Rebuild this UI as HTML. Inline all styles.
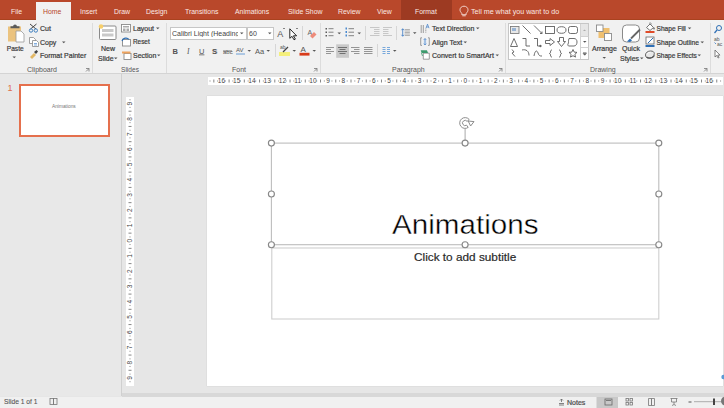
<!DOCTYPE html>
<html><head><meta charset="utf-8">
<style>
*{margin:0;padding:0;box-sizing:border-box}
html,body{width:724px;height:408px;overflow:hidden;background:#e6e6e6;font-family:"Liberation Sans",sans-serif}
.a{position:absolute}
.t{position:absolute;white-space:nowrap;line-height:1;font-size:7px;color:#3a3a3a;-webkit-text-stroke:0.2px #3a3a3a}
#tabs{left:0;top:0;width:724px;height:20px;background:#b9482b}
.tab{position:absolute;top:7px;font-size:6.9px;color:#fbe9e3;white-space:nowrap;line-height:10px}
#ribbon{left:0;top:20px;width:724px;height:54px;background:#f1f1f1;border-bottom:1px solid #d4d4d4}
.sep{position:absolute;width:1px;background:#dcdcdc}
.lbl{position:absolute;top:65.5px;font-size:7px;color:#555;white-space:nowrap;line-height:8px}
.dd{position:absolute;width:0;height:0;border-left:2px solid transparent;border-right:2px solid transparent;border-top:2px solid #555}
#status{left:0;top:396.5px;width:724px;height:12px;background:#f0f0f0}
</style></head><body>
<!-- tab bar -->
<div id="tabs" class="a">
  <div class="a" style="left:0;top:19px;width:724px;height:1px;background:#a9421f"></div>
  <div class="tab" style="left:11px">File</div>
  <div class="a" style="left:36px;top:2px;width:35px;height:18px;background:#f1f1f1"></div>
  <div class="tab" style="left:43px;color:#b7472a">Home</div>
  <div class="tab" style="left:80px">Insert</div>
  <div class="tab" style="left:114px">Draw</div>
  <div class="tab" style="left:146px">Design</div>
  <div class="tab" style="left:185px">Transitions</div>
  <div class="tab" style="left:235px">Animations</div>
  <div class="tab" style="left:288px">Slide Show</div>
  <div class="tab" style="left:338px">Review</div>
  <div class="tab" style="left:377px">View</div>
  <div class="a" style="left:401px;top:0;width:51px;height:20px;background:#9d3a22"></div>
  <div class="tab" style="left:415px">Format</div>
  <div class="tab" style="left:471px;font-size:7.15px">Tell me what you want to do</div>
  <svg class="a" style="left:459px;top:5px" width="10" height="12" viewBox="0 0 10 12"><path d="M2.8 8.2C1.5 7 1 6 1 4.8 1 2.7 2.8 1.2 5 1.2s4 1.5 4 3.6c0 1.2-.5 2.2-1.8 3.4v1.5H2.8z" fill="none" stroke="#f6e0da" stroke-width="0.9"/><path d="M3.3 10.8h3.4" stroke="#f6e0da" stroke-width="0.9"/></svg>
</div>
<!-- ribbon -->
<div id="ribbon" class="a"></div>
<div class="sep" style="left:92px;top:23px;height:50px"></div>
<div class="sep" style="left:166px;top:23px;height:50px"></div>
<div class="sep" style="left:320px;top:23px;height:50px"></div>
<div class="sep" style="left:505px;top:23px;height:50px"></div>
<div class="sep" style="left:710px;top:23px;height:50px"></div>
<div class="lbl" style="left:27px">Clipboard</div>
<div class="lbl" style="left:121px;font-size:6.6px">Slides</div>
<div class="lbl" style="left:232px">Font</div>
<div class="lbl" style="left:392px">Paragraph</div>
<div class="lbl" style="left:590px">Drawing</div>

<!-- ribbon texts -->
<div class="t" style="left:6.8px;top:45.8px;font-size:6.6px">Paste</div>
<div class="t" style="left:40px;top:25px">Cut</div>
<div class="t" style="left:40px;top:39px">Copy</div>
<div class="t" style="left:40px;top:52px">Format Painter</div>
<div class="t" style="left:101px;top:45px">New</div>
<div class="t" style="left:98px;top:55px">Slide</div>
<div class="t" style="left:133px;top:25px">Layout</div>
<div class="t" style="left:133px;top:39px;font-size:6.4px">Reset</div>
<div class="t" style="left:133px;top:52px">Section</div>
<div class="a" style="left:170px;top:27px;width:77px;height:13px;background:#fff;border:1px solid #c6c6c6"></div>
<div class="a" style="left:247px;top:27px;width:27px;height:13px;background:#fff;border:1px solid #c6c6c6"></div>
<div class="t" style="left:172px;top:30px;width:66px;overflow:hidden;color:#444;-webkit-text-stroke:0">Calibri Light (Heading</div>
<div class="t" style="left:249px;top:30px;color:#444;-webkit-text-stroke:0">60</div>
<div class="t" style="left:432px;top:25px">Text Direction</div>
<div class="t" style="left:432px;top:39px">Align Text</div>
<div class="t" style="left:432px;top:52px">Convert to SmartArt</div>
<div class="t" style="left:592px;top:45px">Arrange</div>
<div class="t" style="left:622px;top:45px">Quick</div>
<div class="t" style="left:620px;top:55px">Styles</div>
<div class="t" style="left:656.5px;top:25.7px;font-size:6.6px">Shape Fill</div>
<div class="t" style="left:656.5px;top:39.5px;font-size:6.7px">Shape Outline</div>
<div class="t" style="left:656.5px;top:52.7px;font-size:6.5px">Shape Effects</div>

<svg class="a" style="left:0;top:0" width="724" height="408" viewBox="0 0 724 408">
 <g fill="#555">
  <!-- dropdown arrows -->
  <path d="M12.5 56.5h3.5l-1.75 1.8z"/>
  <path d="M62 41.5h3.5l-1.75 1.8z"/>
  <path d="M114 57.5h3.5l-1.75 1.8z"/>
  <path d="M156 27.5h3.5l-1.75 1.8z"/>
  <path d="M157 54.5h3.5l-1.75 1.8z"/>
  <path d="M240 32.5h3.5l-1.75 1.8z"/>
  <path d="M268 32.5h3.5l-1.75 1.8z"/>
  <path d="M247.5 50h3.5l-1.75 1.8z"/>
  <path d="M266.5 50h3.5l-1.75 1.8z"/>
  <path d="M292.5 50h3.5l-1.75 1.8z"/>
  <path d="M312.5 50h3.5l-1.75 1.8z"/>
  <path d="M337.5 32.5h3.5l-1.75 1.8z"/>
  <path d="M357.5 32.5h3.5l-1.75 1.8z"/>
  <path d="M413 32.3h3.5l-1.75 1.8z"/>
  <path d="M393 50h3.5l-1.75 1.8z"/>
  <path d="M476 27.5h3.5l-1.75 1.8z"/>
  <path d="M463.5 41.5h3.5l-1.75 1.8z"/>
  <path d="M495.5 54.5h3.5l-1.75 1.8z"/>
  <path d="M602.5 57h3.5l-1.75 1.8z"/>
  <path d="M640 57.5h3.5l-1.75 1.8z"/>
  <path d="M687.8 27.5h3.5l-1.75 1.8z"/>
  <path d="M700.5 41.5h3.5l-1.75 1.8z"/>
  <path d="M697.5 54.5h3.5l-1.75 1.8z"/>
 </g>
 <!-- dialog launchers -->
 <g fill="none" stroke="#777" stroke-width="0.8">
  <path d="M86 68.5h3v3M86 71.5l3-3"/>
  <path d="M314 68.5h3v3M314 71.5l3-3"/>
  <path d="M499 68.5h3v3M499 71.5l3-3"/>
  <path d="M704 68.5h3v3M704 71.5l3-3"/>
 </g>
 <!-- Paste -->
 <rect x="8" y="26.5" width="13" height="15" fill="#ebc37f"/>
 <path d="M10.5 28.3h9v-2h-2.6a1.9 1.9 0 0 0 -3.8 0h-2.6z" fill="#5a5a5a"/>
 <path d="M16 31h5l3 3v8h-8z" fill="#fff" stroke="#999" stroke-width="0.8"/>
 <!-- Cut -->
 <g stroke="#444" stroke-width="1" fill="none">
  <path d="M30 24l6 5M36.5 24l-6 5"/>
 </g>
 <g stroke="#3f7fbf" stroke-width="1" fill="none">
  <circle cx="31" cy="30.5" r="1.7"/><circle cx="35.8" cy="30.5" r="1.7"/>
 </g>
 <!-- Copy -->
 <g fill="#fff" stroke="#888" stroke-width="0.8">
  <path d="M29.5 37.5h4l2 2v4h-6z"/>
  <path d="M32.5 40.5h4l2 2v4h-6z"/>
 </g>
 <path d="M34 43.5h3M34 45h3" stroke="#4a8ad0" stroke-width="0.7"/>
 <!-- Format painter -->
 <path d="M30 57l4-4 2 2-4 4z" fill="#e3b865"/>
 <path d="M34 52l2.5-2 1.5 1.5-2 2.5z" fill="#444"/>
 <!-- New slide -->
 <rect x="99.5" y="26" width="16.5" height="13.5" rx="1" fill="#fff" stroke="#8a8a8a" stroke-width="1"/>
 <rect x="102" y="29" width="11.5" height="3" fill="#c9c9c9"/>
 <rect x="102" y="33.5" width="11.5" height="3" fill="#c9c9c9"/>
 <circle cx="101" cy="26.5" r="2.3" fill="#f7cf6a"/>
 <!-- Layout -->
 <rect x="121.5" y="24.5" width="9" height="7.5" fill="#fff" stroke="#8a8a8a" stroke-width="0.9"/>
 <rect x="123" y="26" width="6" height="1.5" fill="#aaa"/>
 <rect x="123" y="28.5" width="2.5" height="2.5" fill="#aaa"/><rect x="126.5" y="28.5" width="2.5" height="2.5" fill="#aaa"/>
 <!-- Reset -->
 <rect x="122.5" y="39.5" width="8" height="6.5" fill="#fff" stroke="#8a8a8a" stroke-width="0.9"/>
 <path d="M122 41c1-3 5-4 7-1.5" fill="none" stroke="#2e6fb5" stroke-width="1.2"/>
 <!-- Section -->
 <rect x="124" y="53.5" width="7" height="6" fill="#fff" stroke="#8a8a8a" stroke-width="0.9"/>
 <rect x="122" y="51.5" width="8.5" height="2" fill="#eea35e"/>
 <!-- Font row 2 -->
 <g font-family="Liberation Sans" fill="#555" font-size="7.5">
  <text x="172.5" y="53.5" font-weight="bold">B</text>
  <text x="187" y="53.5" font-style="italic" font-family="Liberation Serif">I</text>
  <text x="199" y="53.5" text-decoration="underline">U</text>
  <text x="212.8" y="54.2" font-weight="bold" fill="#bbb">S</text><text x="212" y="53.5" font-weight="bold">S</text>
  <text x="223" y="53.5" font-size="6">abc</text>
  <text x="236" y="52" font-size="6">AV</text>
  <text x="255" y="53.5">Aa</text>
  <text x="277.3" y="36.8" font-size="9">A</text>
  <text x="280" y="48.5" font-size="5">ab</text>
  <text x="300.5" y="52" font-size="8">A</text>
 </g>
 
 <path d="M223 51h9" stroke="#555" stroke-width="0.8"/>
 <path d="M236 54h9" stroke="#4a8ad0" stroke-width="0.8"/>
 <path d="M283 29l1 -1 1 1" fill="none" stroke="#555" stroke-width="0.7"/>
 <!-- cursor -->
 <path d="M289.8 28.8v9.5l2.2-2 2 3.5 1.4-.7-2-3.3h3.2z" fill="#fff" stroke="#111" stroke-width="0.9" stroke-linejoin="round"/>
 <path d="M296 29l1 -1 1 1" fill="none" stroke="#555" stroke-width="0.7"/>
 <!-- clear formatting -->
 <text x="307.5" y="35" font-family="Liberation Sans" font-size="7" fill="#666">A</text>
 <path d="M310 36l4-4 2.5 2.5-4 4z" fill="#ee8b7b"/>
 <!-- highlighter / font color bars -->
 <rect x="279" y="52" width="11" height="4" fill="#f4ef7c"/>
 <path d="M283 52l5-5" stroke="#444" stroke-width="1.3"/>
 <rect x="299.5" y="52.8" width="10" height="2.8" fill="#d83b1a"/>
 <!-- separators small -->
 <g stroke="#d6d6d6" stroke-width="1">
  <path d="M302.5 26v14M275.5 44v13M365.5 26v14M396.5 26v14M377.5 44v13"/>
 </g>
 <!-- Paragraph icons -->
 <g fill="#5a5a5a">
  <rect x="325.5" y="28" width="1.5" height="1.5"/><rect x="325.5" y="31.5" width="1.5" height="1.5"/><rect x="325.5" y="35" width="1.5" height="1.5"/>
 </g>
 <g fill="#4a8ad0">
  <rect x="345.5" y="27.5" width="1.5" height="2"/><rect x="345.5" y="31" width="1.5" height="2"/><rect x="345.5" y="34.5" width="1.5" height="2"/>
 </g>
 <g stroke="#777" stroke-width="0.9">
  <path d="M328.5 28.7h5M328.5 32.2h5M328.5 35.7h5"/>
  <path d="M348.5 28.7h5.5M348.5 32.2h5.5M348.5 35.7h5.5"/>
 </g>
 <g stroke="#c2c2c2" stroke-width="0.9">
  <path d="M370 27.5h9.5M374 29.5h5.5M374 31.5h5.5M374 33.5h5.5M370 35.5h9.5"/>
  <path d="M383 27.5h9M383 29.5h5.5M383 31.5h5.5M383 33.5h5.5M383 35.5h9"/>
 </g>
 <g stroke="#777" stroke-width="0.9">
  <path d="M404.7 29.5h5.2M404.7 31h5.2M404.7 32.5h5.2M404.7 34h5.2M404.7 35.5h5.2" stroke="#aaa"/>
 </g>
 <path d="M402.7 29v7M401.5 30.2l1.2-1.5 1.2 1.5M401.5 34.8l1.2 1.5 1.2-1.5" stroke="#3b7ac4" stroke-width="0.8" fill="none"/>
 <rect x="336.2" y="44.3" width="12.8" height="13.5" fill="#c9c9c9"/>
 <g stroke="#8a8a8a" stroke-width="0.9">
  <path d="M326 47.5h8M326 49.5h5M326 51.5h8M326 53.5h5"/>
  <path d="M338 47.5h9M339.5 49.5h6M338 51.5h9M339.5 53.5h6" stroke="#666"/>
  <path d="M351 47.5h8.5M354 49.5h5.5M351 51.5h8.5M354 53.5h5.5"/>
  <path d="M364 47.5h8.5M364 49.5h8.5M364 51.5h8.5M364 53.5h8.5"/>
 </g>
 <g stroke="#6a9fd8" stroke-width="0.9"><path d="M382.5 47.5h3M382.5 49.5h3M382.5 51.5h3M382.5 53.5h3M387 47.5h3M387 49.5h3M387 51.5h3M387 53.5h3"/></g>
 <!-- text direction / align / smartart icons -->
 <g stroke="#777" stroke-width="0.7" fill="none">
  <path d="M421.2 25v8M423.3 25v8" />
  <path d="M425.8 28.5v4.5" stroke-dasharray="1 0.6"/>
  <path d="M426 28.2l1.5-4 1.5 4M426.5 27h2" stroke="#3b7ac4"/>
  <path d="M422 37.8h-1.3v7.6h1.3M428 37.8h1.3v7.6h-1.3"/>
  <path d="M423.3 53.2h6v6h-6z" fill="#fff"/>
 </g>
 <rect x="423.5" y="39" width="3" height="5.5" fill="#dbe7f5"/>
 <path d="M425 38.5v6.5M423.8 39.8l1.2-1.2 1.2 1.2M423.8 43.7l1.2 1.2 1.2-1.2" stroke="#3b7ac4" stroke-width="0.7" fill="none"/>
 <path d="M420.7 50.3h6.2l1.2 2.7h-6.5z" fill="#3d9a6d"/>
 <path d="M421.5 53l1 3" stroke="#3d9a6d" stroke-width="0.8"/>
<!-- shapes gallery -->
 <rect x="508.5" y="23.5" width="80" height="36" fill="#fff" stroke="#c6c6c6" stroke-width="1"/>
 <rect x="580.5" y="24" width="7.5" height="12" fill="#e6e6e6"/>
 <path d="M580.5 36.5h8M580.5 47.5h8M580.5 24v35" stroke="#d2d2d2" stroke-width="1"/>
 <path d="M583 41h3.5l-1.75 1.8z" fill="#555"/>
 <path d="M583 52.5h3.5M583 53.5h3.5l-1.75 1.8z" fill="#555" stroke="#555" stroke-width="0.5"/>
 <path d="M583 31h3l-1.5-1.5z" fill="#aaa"/>
 <g fill="none" stroke="#555" stroke-width="0.85">
  <rect x="510.5" y="26.5" width="8.5" height="7" fill="#e8e8e8" stroke="#777"/>
  <path d="M522.5 25.5l8 8"/>
  <path d="M534 25.5l8 8M540 33.5h2v-2"/>
  <rect x="545.5" y="26.5" width="9" height="7"/>
  <ellipse cx="561.5" cy="30" rx="4.5" ry="3.3"/>
  <rect x="568.5" y="26.5" width="9" height="7" rx="2"/>
  <path d="M510.5 46.5l3.5-8 3.5 8z"/>
  <path d="M522.5 38.5h3.5v7.5h4"/>
  <path d="M534 38.5h3.5v7.5h3.5M540 45v2l1.5-1z"/>
  <path d="M545.5 40.5h4.5v-2l4.5 3.5-4.5 3.5v-2h-4.5z"/>
  <path d="M559.5 37.5h4v4h2l-4 5-4-5h2z"/>
  <path d="M569 38.5h5c2 0 3 1.5 3 3.5s-1 4-3 4h-5c-1 0-1.5-1-1-2 1-1.5 0-3 1-5.5z"/>
  <path d="M512 49.5l2 2.5-2 1 3 3.5"/>
  <path d="M522 50c4-1 7 1 7 5.5"/>
  <path d="M534 56c1-6 3-6 4-3s2 3 4 3"/>
  <path d="M552 50c-1 0-1.5.5-1.5 2s-1 1.5-1 1.5 1 0 1 1.5.5 2 1.5 2"/>
  <path d="M559 50c1 0 1.5.5 1.5 2s1 1.5 1 1.5-1 0-1 1.5-.5 2-1.5 2"/>
  <path d="M573 49.5l1.2 2.6 2.8.3-2.1 1.9.6 2.8-2.5-1.4-2.5 1.4.6-2.8-2.1-1.9 2.8-.3z"/>
 </g>
 <path d="M512 28h4v3h-4z" fill="#4a7fc0" opacity="0.5"/>
 <!-- Arrange -->
 <rect x="598.5" y="28" width="11" height="10" fill="#f0c070"/>
 <rect x="596.5" y="25" width="6.5" height="6.5" fill="#fff" stroke="#8a8a8a" stroke-width="0.9"/>
 <rect x="604.5" y="33.5" width="7" height="7" fill="#fff" stroke="#8a8a8a" stroke-width="0.9"/>
 <!-- Quick styles -->
 <rect x="622.5" y="25" width="17" height="17" rx="4" fill="#fff" stroke="#8a8a8a" stroke-width="1"/>
 <path d="M627 41.5l3-3 2 2-2 1.5z" fill="#2e6fb5"/>
 <path d="M631 38.5l9-9" stroke="#666" stroke-width="1.8"/>
 <!-- Shape fill/outline/effects -->
 <path d="M646.5 27.5l3.5-3.5 3.5 3.5-3.5 3z" fill="#fff" stroke="#666" stroke-width="0.9"/><path d="M649 23.5c1-1 2.5-.5 2.5.8" fill="none" stroke="#666" stroke-width="0.7"/><circle cx="654" cy="28.5" r="0.9" fill="#777"/>
 <rect x="645.5" y="31" width="9" height="2" fill="#e04a28"/>
 <rect x="646" y="37" width="8" height="7" fill="#fff" stroke="#666" stroke-width="0.8"/>
 <path d="M648 43l5-5" stroke="#2e6fb5" stroke-width="1"/>
 <rect x="645.5" y="45" width="9" height="2" fill="#2e6fb5"/>
 <path d="M645.5 55c0-2.5 2.5-4 5-4s3.8 1 3.8 2.6c0 2.5-2.3 4.4-5 4.4s-3.8-1-3.8-3z" fill="#e8e8e8" stroke="#555" stroke-width="0.9"/><path d="M647 54.5c.5-1.5 2-2.2 3.5-2.2" stroke="#fff" stroke-width="1" fill="none"/>
 <path d="M646.5 57c2 1.8 6 1.6 8-1.5" stroke="#555" stroke-width="1.2" fill="none"/>
 <!-- editing group -->
 <circle cx="719" cy="28" r="2.5" fill="none" stroke="#2e6fb5" stroke-width="1"/>
 <path d="M717 30l-2.5 3" stroke="#2e6fb5" stroke-width="1.2"/>
 <text x="714" y="41" font-family="Liberation Sans" font-size="5" fill="#555">ab</text><text x="717" y="45.5" font-family="Liberation Sans" font-size="5" fill="#555">ac</text><path d="M714.5 42.5l1.5 1.5" stroke="#3b7ac4" stroke-width="0.8"/>
 <path d="M715 50v7l1.6-1.5 1.5 2.5 1-.5-1.4-2.4h2.3z" fill="#fff" stroke="#666" stroke-width="0.8"/>
</svg>

<!-- left pane -->
<div class="a" style="left:0;top:74px;width:121px;height:322px;background:#e8e8e8"></div>
<div class="a" style="left:121px;top:74px;width:1px;height:322px;background:#d0d0d0"></div>
<div class="t" style="left:7.5px;top:83.5px;font-size:9px;color:#df6e4d;-webkit-text-stroke:0">1</div>
<div class="a" style="left:18.5px;top:84px;width:91.5px;height:53px;border:2px solid #e5704d;background:#fff"></div>
<div class="t" style="left:52px;top:105.2px;font-size:4.8px;color:#777;-webkit-text-stroke:0">Animations</div>

<!-- rulers -->
<div class="a" style="left:208px;top:77px;width:515px;height:8px;background:#fff"></div>
<div class="a" style="left:126px;top:97px;width:8px;height:289px;background:#fff"></div>

<!-- slide -->
<div class="a" style="left:207px;top:96px;width:516px;height:290px;background:#fff;box-shadow:0 0 1px #bbb"></div>

<!-- slide content -->
<svg class="a" style="left:0;top:0" width="724" height="408" viewBox="0 0 724 408">
 <rect x="271.8" y="248" width="387" height="71" fill="none" stroke="#cfcfcf" stroke-width="1.1"/>
 <rect x="271.4" y="143.1" width="387.4" height="101.6" fill="none" stroke="#bdbdbd" stroke-width="1.1"/>
 <path d="M465.1 128.5v11.8" stroke="#a8a8a8" stroke-width="1"/>
 <g fill="#fff" stroke="#888" stroke-width="1.15">
  <circle cx="271.4" cy="143.1" r="3"/><circle cx="465.1" cy="143.1" r="3"/><circle cx="658.8" cy="143.1" r="3"/>
  <circle cx="271.4" cy="194" r="3"/><circle cx="658.8" cy="194" r="3"/>
  <circle cx="271.4" cy="244.7" r="3"/><circle cx="465.1" cy="244.7" r="3"/><circle cx="658.8" cy="244.7" r="3"/>
 </g>
 <g fill="#fff" stroke="#8c8c8c" stroke-width="1"><path d="M469.24 119.53A5.4 5.4 0 1 0 468.20 127.42L466.59 125.13A2.6 2.6 0 1 1 467.09 121.33z"/><path d="M468.2 121L474 121.6L470.6 126z" stroke-linejoin="round"/></g>
</svg>
<div class="t" style="left:392px;top:211.5px;font-size:27px;color:#000;-webkit-text-stroke:0.4px #fff;transform:scaleX(1.097);transform-origin:0 0">Animations</div>
<div class="t" style="left:414px;top:251.7px;font-size:11.8px;color:#2a2a2a;-webkit-text-stroke:0.2px #2a2a2a">Click to add subtitle</div>
<svg class="a" style="left:0;top:0" width="724" height="408" viewBox="0 0 724 408">
<g font-family="Liberation Sans" font-size="6.5" fill="#444" text-anchor="middle">
<text x="221.46" y="83.3">16</text>
<text x="236.70" y="83.3">15</text>
<text x="251.94" y="83.3">14</text>
<text x="267.18" y="83.3">13</text>
<text x="282.42" y="83.3">12</text>
<text x="297.66" y="83.3">11</text>
<text x="312.90" y="83.3">10</text>
<text x="328.14" y="83.3">9</text>
<text x="343.38" y="83.3">8</text>
<text x="358.62" y="83.3">7</text>
<text x="373.86" y="83.3">6</text>
<text x="389.10" y="83.3">5</text>
<text x="404.34" y="83.3">4</text>
<text x="419.58" y="83.3">3</text>
<text x="434.82" y="83.3">2</text>
<text x="450.06" y="83.3">1</text>
<text x="465.30" y="83.3">0</text>
<text x="480.54" y="83.3">1</text>
<text x="495.78" y="83.3">2</text>
<text x="511.02" y="83.3">3</text>
<text x="526.26" y="83.3">4</text>
<text x="541.50" y="83.3">5</text>
<text x="556.74" y="83.3">6</text>
<text x="571.98" y="83.3">7</text>
<text x="587.22" y="83.3">8</text>
<text x="602.46" y="83.3">9</text>
<text x="617.70" y="83.3">10</text>
<text x="632.94" y="83.3">11</text>
<text x="648.18" y="83.3">12</text>
<text x="663.42" y="83.3">13</text>
<text x="678.66" y="83.3">14</text>
<text x="693.90" y="83.3">15</text>
<text x="709.14" y="83.3">16</text>
<text transform="translate(132.2 103.59) rotate(-90)" x="0" y="0">9</text>
<text transform="translate(132.2 118.83) rotate(-90)" x="0" y="0">8</text>
<text transform="translate(132.2 134.07) rotate(-90)" x="0" y="0">7</text>
<text transform="translate(132.2 149.31) rotate(-90)" x="0" y="0">6</text>
<text transform="translate(132.2 164.55) rotate(-90)" x="0" y="0">5</text>
<text transform="translate(132.2 179.79) rotate(-90)" x="0" y="0">4</text>
<text transform="translate(132.2 195.03) rotate(-90)" x="0" y="0">3</text>
<text transform="translate(132.2 210.27) rotate(-90)" x="0" y="0">2</text>
<text transform="translate(132.2 225.51) rotate(-90)" x="0" y="0">1</text>
<text transform="translate(132.2 240.75) rotate(-90)" x="0" y="0">0</text>
<text transform="translate(132.2 255.99) rotate(-90)" x="0" y="0">1</text>
<text transform="translate(132.2 271.23) rotate(-90)" x="0" y="0">2</text>
<text transform="translate(132.2 286.47) rotate(-90)" x="0" y="0">3</text>
<text transform="translate(132.2 301.71) rotate(-90)" x="0" y="0">4</text>
<text transform="translate(132.2 316.95) rotate(-90)" x="0" y="0">5</text>
<text transform="translate(132.2 332.19) rotate(-90)" x="0" y="0">6</text>
<text transform="translate(132.2 347.43) rotate(-90)" x="0" y="0">7</text>
<text transform="translate(132.2 362.67) rotate(-90)" x="0" y="0">8</text>
<text transform="translate(132.2 377.91) rotate(-90)" x="0" y="0">9</text>
</g>
<path d="M225.27 80.5v1M229.08 79.5v3M232.89 80.5v1M240.51 80.5v1M244.32 79.5v3M248.13 80.5v1M255.75 80.5v1M259.56 79.5v3M263.37 80.5v1M270.99 80.5v1M274.80 79.5v3M278.61 80.5v1M286.23 80.5v1M290.04 79.5v3M293.85 80.5v1M301.47 80.5v1M305.28 79.5v3M309.09 80.5v1M316.71 80.5v1M320.52 79.5v3M324.33 80.5v1M331.95 80.5v1M335.76 79.5v3M339.57 80.5v1M347.19 80.5v1M351.00 79.5v3M354.81 80.5v1M362.43 80.5v1M366.24 79.5v3M370.05 80.5v1M377.67 80.5v1M381.48 79.5v3M385.29 80.5v1M392.91 80.5v1M396.72 79.5v3M400.53 80.5v1M408.15 80.5v1M411.96 79.5v3M415.77 80.5v1M423.39 80.5v1M427.20 79.5v3M431.01 80.5v1M438.63 80.5v1M442.44 79.5v3M446.25 80.5v1M453.87 80.5v1M457.68 79.5v3M461.49 80.5v1M469.11 80.5v1M472.92 79.5v3M476.73 80.5v1M484.35 80.5v1M488.16 79.5v3M491.97 80.5v1M499.59 80.5v1M503.40 79.5v3M507.21 80.5v1M514.83 80.5v1M518.64 79.5v3M522.45 80.5v1M530.07 80.5v1M533.88 79.5v3M537.69 80.5v1M545.31 80.5v1M549.12 79.5v3M552.93 80.5v1M560.55 80.5v1M564.36 79.5v3M568.17 80.5v1M575.79 80.5v1M579.60 79.5v3M583.41 80.5v1M591.03 80.5v1M594.84 79.5v3M598.65 80.5v1M606.27 80.5v1M610.08 79.5v3M613.89 80.5v1M621.51 80.5v1M625.32 79.5v3M629.13 80.5v1M636.75 80.5v1M640.56 79.5v3M644.37 80.5v1M651.99 80.5v1M655.80 79.5v3M659.61 80.5v1M667.23 80.5v1M671.04 79.5v3M674.85 80.5v1M682.47 80.5v1M686.28 79.5v3M690.09 80.5v1M697.71 80.5v1M701.52 79.5v3M705.33 80.5v1M217.65 80.5v1M712.95 80.5v1M213.84 79.5v3M716.76 79.5v3M210.03 80.5v1M720.57 80.5v1M129.5 99.78h1M129.5 107.40h1M128.5 111.21h3M129.5 115.02h1M129.5 122.64h1M128.5 126.45h3M129.5 130.26h1M129.5 137.88h1M128.5 141.69h3M129.5 145.50h1M129.5 153.12h1M128.5 156.93h3M129.5 160.74h1M129.5 168.36h1M128.5 172.17h3M129.5 175.98h1M129.5 183.60h1M128.5 187.41h3M129.5 191.22h1M129.5 198.84h1M128.5 202.65h3M129.5 206.46h1M129.5 214.08h1M128.5 217.89h3M129.5 221.70h1M129.5 229.32h1M128.5 233.13h3M129.5 236.94h1M129.5 244.56h1M128.5 248.37h3M129.5 252.18h1M129.5 259.80h1M128.5 263.61h3M129.5 267.42h1M129.5 275.04h1M128.5 278.85h3M129.5 282.66h1M129.5 290.28h1M128.5 294.09h3M129.5 297.90h1M129.5 305.52h1M128.5 309.33h3M129.5 313.14h1M129.5 320.76h1M128.5 324.57h3M129.5 328.38h1M129.5 336.00h1M128.5 339.81h3M129.5 343.62h1M129.5 351.24h1M128.5 355.05h3M129.5 358.86h1M129.5 366.48h1M128.5 370.29h3M129.5 374.10h1M129.5 381.72h1" stroke="#777" stroke-width="0.9"/>
</svg>
<!-- status bar -->
<div class="a" style="left:122px;top:392.5px;width:602px;height:4px;background:#d8d8d8"></div>
<div id="status" class="a"></div>
<div class="t" style="left:4px;top:398.5px;font-size:6.7px;color:#555;-webkit-text-stroke:0.1px #555">Slide 1 of 1</div>
<!-- status -->
<svg class="a" style="left:0;top:0" width="724" height="408" viewBox="0 0 724 408">
 <rect x="50" y="398.5" width="3.5" height="6" fill="none" stroke="#777" stroke-width="0.8"/>
 <rect x="53.5" y="398.5" width="3.5" height="6" fill="none" stroke="#777" stroke-width="0.8"/>
 <path d="M559 403.5h5M559 405h5M561.5 399v3M560 400.5l1.5-1.5 1.5 1.5" stroke="#666" stroke-width="0.8" fill="none"/>
 <rect x="596.5" y="397" width="21.5" height="11" fill="#c8c8c8"/>
 <rect x="605" y="399" width="7" height="6" fill="none" stroke="#666" stroke-width="0.8"/>
 <path d="M606 400.5h5" stroke="#666" stroke-width="0.8"/>
 <g fill="none" stroke="#777" stroke-width="0.8">
  <rect x="626" y="398.5" width="2.5" height="2.5"/><rect x="630" y="398.5" width="2.5" height="2.5"/>
  <rect x="626" y="402.5" width="2.5" height="2.5"/><rect x="630" y="402.5" width="2.5" height="2.5"/>
  <path d="M648.5 398.5h3v7h-3zM651.5 398.5h3v7h-3z"/>
  <path d="M670.5 398.5h7M671.5 398.5v3.5h5v-3.5M674 402v2.5M672 405.5l2-1 2 1"/>
 </g>
 <path d="M688.5 402h3" stroke="#555" stroke-width="1"/>
 <path d="M694 401.7h28" stroke="#999" stroke-width="0.8"/>
 <rect x="713" y="398.5" width="2" height="6.5" fill="#444"/>
 <circle cx="723.5" cy="377" r="2.2" fill="#5b9bd5"/>
 <circle cx="725.5" cy="401" r="4.5" fill="#777"/>
</svg>
<div class="t" style="left:567px;top:398.5px;font-size:7px;color:#555">Notes</div>
</body></html>
